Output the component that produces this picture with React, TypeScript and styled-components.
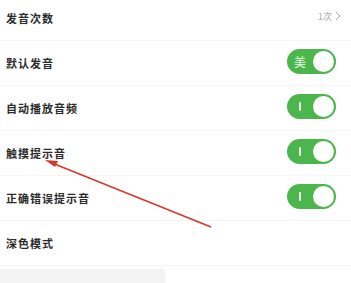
import React from "react";
import styled, { createGlobalStyle } from "styled-components";

const Global = createGlobalStyle`
  html, body { margin: 0; padding: 0; background: #fff; }
  body { font-family: "Noto Sans CJK SC", "Noto Sans", sans-serif; overflow: hidden; }
`;

const Page = styled.div`
  position: relative;
  width: 351px;
  height: 283px;
  overflow: hidden;
  background: #fff;
`;

const List = styled.div`
  display: flex;
  flex-direction: column;
  margin-top: -4px;
`;

const Row = styled.div`
  height: 44px;
  display: flex;
  align-items: center;
  justify-content: space-between;
  padding: 0 15px 0 6px;
  border-bottom: 1px solid #f5f5f5;
`;

const Label = styled.span`
  font-size: 11px;
  font-weight: 700;
  letter-spacing: 1px;
  color: #2b2b2b;
`;

const Value = styled.span`
  display: flex;
  align-items: center;
  gap: 3px;
  font-size: 9px;
  color: #a5a5a5;
  margin-right: -5px;
  margin-top: -4px;
`;

const Toggle = styled.div`
  width: 49px;
  height: 25px;
  border-radius: 13px;
  background: #4bb64b;
  display: flex;
  align-items: center;
  justify-content: space-between;
  padding: 0 2px 0 5px;
  box-sizing: border-box;
  margin-top: -3px;
`;

const OnMark = styled.span`
  width: 16px;
  display: flex;
  justify-content: center;
  color: #e9f6e9;
  font-size: 12px;
  line-height: 1;
`;

const Bar = styled.span`
  width: 2px;
  height: 9px;
  background: #eef8ee;
  border-radius: 1px;
`;

const Knob = styled.span`
  width: 21px;
  height: 21px;
  border-radius: 50%;
  background: #fff;
`;

const Footer = styled.div`
  margin-top: 3px;
  width: 165px;
  height: 20px;
  background: #f3f3f3;
`;

const ArrowLayer = styled.svg`
  position: absolute;
  left: 0;
  top: 0;
  pointer-events: none;
`;

type Item = { label: string; kind: "value" | "mei" | "on" | "none" };

const items: Item[] = [
  { label: "发音次数", kind: "value" },
  { label: "默认发音", kind: "mei" },
  { label: "自动播放音频", kind: "on" },
  { label: "触摸提示音", kind: "on" },
  { label: "正确错误提示音", kind: "on" },
  { label: "深色模式", kind: "none" },
];

export default function App() {
  return (
    <Page>
      <Global />
      <List>
        {items.map((it) => (
          <Row key={it.label}>
            <Label>{it.label}</Label>
            {it.kind === "value" && (
              <Value>
                1次
                <svg width="6" height="10" viewBox="0 0 6 10">
                  <path d="M1 1l4 4L1 9" fill="none" stroke="#a8a8a8" strokeWidth="1" />
                </svg>
              </Value>
            )}
            {it.kind === "mei" && (
              <Toggle>
                <OnMark>美</OnMark>
                <Knob />
              </Toggle>
            )}
            {it.kind === "on" && (
              <Toggle>
                <OnMark>
                  <Bar />
                </OnMark>
                <Knob />
              </Toggle>
            )}
          </Row>
        ))}
      </List>
      <Footer />
      <ArrowLayer width="351" height="283" viewBox="0 0 351 283">
        <line x1="52" y1="163" x2="211" y2="227" stroke="#d8372c" strokeWidth="1.6" />
        <path d="M45 160 L58 161 L55 167 Z" fill="#d8372c" />
      </ArrowLayer>
    </Page>
  );
}
